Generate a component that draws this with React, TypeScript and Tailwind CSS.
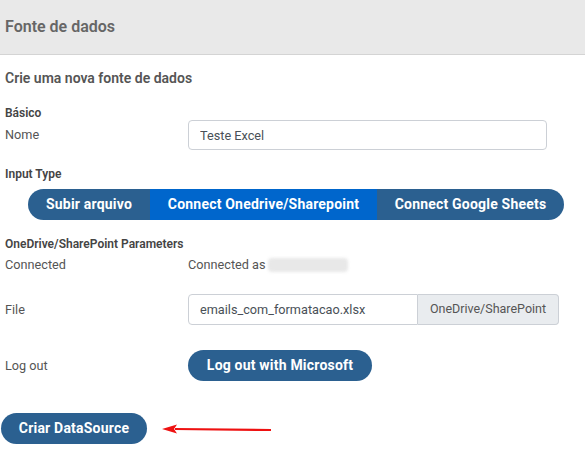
import React from "react";

const font = { fontFamily: "Roboto, 'Liberation Sans', sans-serif" };

const Row: React.FC<{ label: string; children: React.ReactNode; className?: string }> = ({ label, children, className }) => (
    <div className={`flex items-center ${className ?? ""}`}>
        <div className="w-[188px] shrink-0 pl-[5px] text-[12.7px] text-[#555]">{label}</div>
        {children}
    </div>
);

export default function App() {
    return (
        <div className="w-[585px] h-[460px] bg-white overflow-hidden" style={font}>
            <div className="h-[55px] bg-[#e9e9e9] border-b border-[#d4d4d4] flex items-center px-[5px]">
                <h1 className="text-[16px] font-semibold text-[#666]">Fonte de dados</h1>
            </div>

            <div className="pt-[13px]">
                <h2 className="px-[5px] text-[14px] font-semibold text-[#555]">Crie uma nova fonte de dados</h2>

                <div className="mt-[15px] px-[5px] text-[12px] font-semibold text-[#444]">Básico</div>
                <Row label="Nome" className="mt-[-2px]">
                    <input
                        defaultValue="Teste Excel"
                        className="w-[359px] h-[30px] border border-[#ccd0d6] rounded px-[11px] text-[12.7px] text-[#495057] outline-none"
                    />
                </Row>

                <div className="mt-[15px] px-[5px] text-[12px] font-semibold text-[#444]">Input Type</div>
                <div className="mt-[6px] ml-[28px] flex w-[536px] h-[31px] rounded-full overflow-hidden text-[14px] font-bold tracking-[0.2px] text-white">
                    <button className="w-[122px] bg-[#2b6090]">Subir arquivo</button>
                    <button className="w-[227px] bg-[#0066cc]">Connect Onedrive/Sharepoint</button>
                    <button className="flex-1 bg-[#2b6090]">Connect Google Sheets</button>
                </div>

                <div className="mt-[15px] px-[5px] text-[12px] font-semibold text-[#444]">OneDrive/SharePoint Parameters</div>
                <Row label="Connected" className="mt-[2px]">
                    <span className="text-[12.7px] text-[#555]">Connected as</span>
                    <span className="ml-[2px] w-[80px] h-[14px] bg-[#e8e8e8] blur-[1.5px] rounded-sm" />
                </Row>

                <Row label="File" className="mt-[20px]">
                    <div className="flex h-[31px] w-[371px]">
                        <input
                            defaultValue="emails_com_formatacao.xlsx"
                            className="w-[230px] border border-[#ccd0d6] rounded-l px-[11px] text-[12.7px] text-[#495057] outline-none"
                        />
                        <div className="flex-1 flex items-center justify-center bg-[#e9ecef] border border-l-0 border-[#ccd0d6] rounded-r text-[12.5px] text-[#555]">
                            OneDrive/SharePoint
                        </div>
                    </div>
                </Row>

                <Row label="Log out" className="mt-[25px]">
                    <button className="w-[184px] h-[31px] rounded-full bg-[#2b6090] text-white text-[14px] font-bold tracking-[0.2px]">
                        Log out with Microsoft
                    </button>
                </Row>

                <div className="mt-[32px] flex items-center">
                    <button className="ml-[1px] w-[146px] h-[31px] rounded-full bg-[#2b6090] text-white text-[14px] font-bold tracking-[0.2px]">
                        Criar DataSource
                    </button>
                    <svg width="120" height="12" viewBox="0 0 120 12" className="ml-[14px]">
                        <path d="M14 6 L110 7" stroke="#ee1111" strokeWidth="2.2" fill="none" />
                        <path d="M1 6 L16 1.5 L13 6 L16 10.5 Z" fill="#ee1111" />
                    </svg>
                </div>
            </div>
        </div>
    );
}
